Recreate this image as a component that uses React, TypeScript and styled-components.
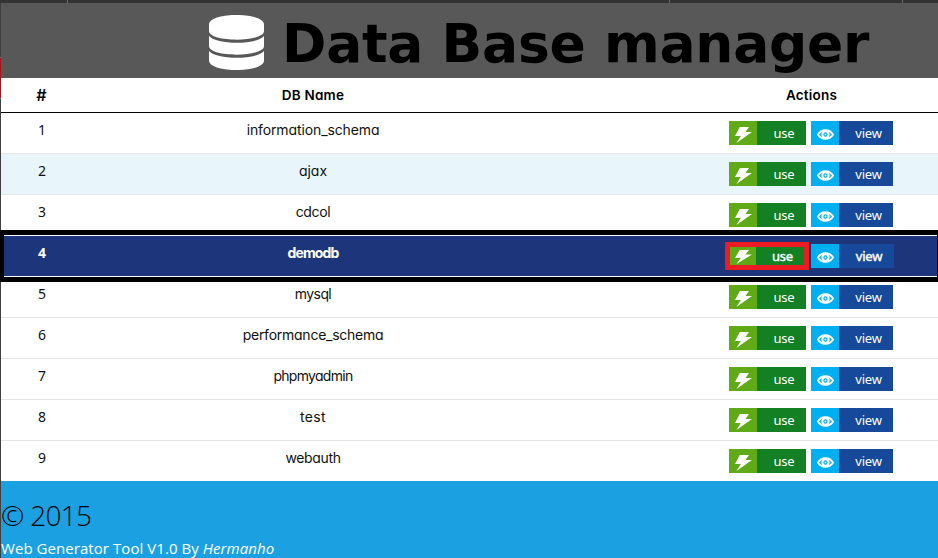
import React from "react";
import styled, { createGlobalStyle, css } from "styled-components";

const GlobalStyle = createGlobalStyle`
  *, *::before, *::after { box-sizing: border-box; }
  body { margin: 0; background: #fff; overflow: hidden; }
`;

const Page = styled.div`
  width: 938px;
  height: 558px;
  display: flex;
  flex-direction: column;
  overflow: hidden;
  font-family: Inter, "Noto Sans", sans-serif;
  color: #000;
`;

const TopStrip = styled.div`
  flex: none;
  height: 3px;
  display: grid;
  grid-template-columns: 68px 602px 233px 1fr;
  background: #333;
`;

const Segment = styled.div`
  border-right: 1px solid #686868;
  &:last-child { border-right: 0; }
`;

const Body = styled.div`
  display: flex;
  flex: 1;
`;

const LeftEdge = styled.div`
  width: 1px;
  flex: none;
  background: linear-gradient(#404040 54px, #777 54px 55px, #a8141a 55px 95px, #777 95px 96px, #404040 96px);
`;

const Main = styled.main`
  flex: 1;
  min-width: 0;
  display: flex;
  flex-direction: column;
`;

const Header = styled.header`
  height: 75px;
  display: flex;
  background: #585858;
  padding-left: 208px;
`;

const DatabaseIcon = styled.svg`
  width: 55px;
  height: 55px;
  margin-top: 12px;
  flex: none;
`;

const Title = styled.h1`
  margin: 0 0 0 18px;
  font: bold 53.5px/75px "DejaVu Sans", sans-serif;
  letter-spacing: -0.25px;
  white-space: nowrap;
  padding-top: 3px;
`;

const columns = css`
  display: grid;
  grid-template-columns: 81px 462px 141px 253px;
`;

const HeadRow = styled.div`
  ${columns}
  height: 35px;
  border-bottom: 1px solid #000;
  font-weight: 600;
  line-height: 34px;
  text-align: center;
  font-feature-settings: "cv11";
`;

const HeadCell = styled.div<{ $start?: number; $size?: number }>`
  grid-column-start: ${(p) => p.$start ?? "auto"};
  font-size: ${(p) => p.$size ?? 13.5}px;
  letter-spacing: 0.2px;
`;

const Row = styled.div<{ $tint: boolean; $selected: boolean; $last: boolean }>`
  ${columns}
  height: ${(p) => (p.$last ? 40 : 41)}px;
  border-bottom: ${(p) => (p.$last ? "0" : "1px solid #e5e5e5")};
  background: ${(p) => (p.$selected ? "#1d357b" : p.$tint ? "#e8f6fc" : "#fff")};
  color: ${(p) => (p.$selected ? "#fff" : "#111")};
  font-weight: ${(p) => (p.$selected ? 700 : 400)};
  ${(p) => p.$selected && css`
    position: relative;
    border-bottom-color: #fff;
    box-shadow: 0 -1px #fff;

    &::after {
      content: "";
      position: absolute;
      inset: -6px 0 -6px -1px;
      border: solid #000;
      border-width: 5px 1px 5px 4px;
      pointer-events: none;
    }
  `}
`;

const NumberCell = styled.div`
  font-family: "Noto Sans", sans-serif;
  font-size: 14px;
  line-height: 34px;
  text-align: center;
  padding-left: 1px;
`;

const NameCell = styled.div<{ $spacing: number }>`
  font-size: 14px;
  line-height: 34px;
  text-align: center;
  letter-spacing: ${(p) => p.$spacing}px;
  font-feature-settings: "cv11";
`;

const Actions = styled.div<{ $selected: boolean }>`
  grid-column-start: 4;
  display: flex;
  align-items: flex-start;
  padding: ${(p) => (p.$selected ? "6px 0 0 40px" : "8px 0 0 44px")};
  gap: ${(p) => (p.$selected ? 2 : 5)}px;
`;

const ActionButton = styled.button<{ $kind: "use" | "view"; $selected: boolean }>`
  display: flex;
  flex: none;
  align-items: stretch;
  overflow: hidden;
  width: ${(p) => (p.$kind === "use" ? 77 : 82)}px;
  height: 24px;
  padding: 0;
  border: 0;
  color: #fff;
  background: ${(p) => (p.$kind === "use" ? "#128023" : "#16499a")};
  font: 13px/24px "Noto Sans", sans-serif;
  letter-spacing: -0.2px;
  ${(p) => p.$selected && p.$kind === "use" && css`
    width: 84px;
    height: 28px;
    border: 5px solid #ed1c24;
    line-height: 19px;
  `}
  ${(p) => p.$selected && p.$kind === "view" && css`
    width: 83px;
    margin-top: 2px;
  `}
  ${(p) => p.$selected && css`
    -webkit-text-stroke: 0.4px #fff;
  `}
`;

const IconBox = styled.span<{ $kind: "use" | "view"; $narrow: boolean }>`
  width: ${(p) => (p.$narrow ? 26 : 28)}px;
  flex: none;
  display: flex;
  justify-content: center;
  align-items: center;
  background: ${(p) => (p.$kind === "use" ? "#60a917" : "#00aff0")};
  padding-top: ${(p) => (p.$narrow ? 1 : 3)}px;
`;

const Label = styled.span`
  flex: 1;
  text-align: center;
  padding-left: 5px;
`;

const Footer = styled.footer`
  flex: 1;
  background: #1ba1e2;
  padding-top: 14px;
`;

const Year = styled.h2`
  margin: 0;
  font: 300 28px/40px "Open Sans", sans-serif;
  letter-spacing: -0.7px;
  color: #000;
`;

const Credit = styled.div`
  font: 15px/20px "Open Sans", sans-serif;
  letter-spacing: 0.06px;
  color: #fff;
  margin-top: 3px;
  white-space: nowrap;
`;

function Bolt({ compact }: { compact: boolean }) {
  return (
    <svg width="17" height={compact ? 14 : 16} viewBox="0 0 17 16" preserveAspectRatio="none" fill="#fff">
      <path d="M4.8 0H14L10.5 5H17L1.4 16L5.8 9H0Z" />
    </svg>
  );
}

function Eye() {
  return (
    <svg width="17" height="11" viewBox="0 0 17 11" fill="none" stroke="#fff">
      <path d="M1 5.5C4.2-.2 12.8-.2 16 5.5C12.8 11.2 4.2 11.2 1 5.5Z" strokeWidth="1.8" />
      <circle cx="8.5" cy="5.5" r="3.2" strokeWidth="2" />
      <circle cx="8.5" cy="5.5" r="1" fill="#fff" stroke="none" />
    </svg>
  );
}

const databases = [
  { name: "information_schema", spacing: -0.12 },
  { name: "ajax", spacing: 0 },
  { name: "cdcol", spacing: -0.35 },
  { name: "demodb", spacing: -0.9 },
  { name: "mysql", spacing: -0.6 },
  { name: "performance_schema", spacing: -0.25 },
  { name: "phpmyadmin", spacing: -0.7 },
  { name: "test", spacing: 0.4 },
  { name: "webauth", spacing: -0.35 },
];

export default function App() {
  return (
    <>
      <GlobalStyle />
      <Page>
        <TopStrip><Segment /><Segment /><Segment /><Segment /></TopStrip>
        <Body>
          <LeftEdge />
          <Main>
            <Header>
              <DatabaseIcon viewBox="0 0 55 55" fill="#fff">
                <path d="M0 9.5C0-3.2 55-3.2 55 9.5V16C55 27.5 0 27.5 0 16Z" />
                <path d="M0 21C7 30 48 30 55 21V31C55 42.5 0 42.5 0 31Z" />
                <path d="M0 36C7 45 48 45 55 36V45.5C55 58.2 0 58.2 0 45.5Z" />
              </DatabaseIcon>
              <Title>Data Base manager</Title>
            </Header>
            <HeadRow>
              <HeadCell $size={16}>#</HeadCell>
              <HeadCell>DB Name</HeadCell>
              <HeadCell $start={4}>Actions</HeadCell>
            </HeadRow>
            {databases.map((db, i) => {
              const selected = db.name === "demodb";
              return (
                <Row key={db.name} $tint={i === 1} $selected={selected} $last={i === databases.length - 1}>
                  <NumberCell>{i + 1}</NumberCell>
                  <NameCell $spacing={db.spacing}>{db.name}</NameCell>
                  <Actions $selected={selected}>
                    <ActionButton $kind="use" $selected={selected}>
                      <IconBox $kind="use" $narrow={selected}><Bolt compact={selected} /></IconBox>
                      <Label>use</Label>
                    </ActionButton>
                    <ActionButton $kind="view" $selected={selected}>
                      <IconBox $kind="view" $narrow={false}><Eye /></IconBox>
                      <Label>view</Label>
                    </ActionButton>
                  </Actions>
                </Row>
              );
            })}
            <Footer>
              <Year>© 2015</Year>
              <Credit>Web Generator Tool V1.0 By <em>Hermanho</em></Credit>
            </Footer>
          </Main>
        </Body>
      </Page>
    </>
  );
}
